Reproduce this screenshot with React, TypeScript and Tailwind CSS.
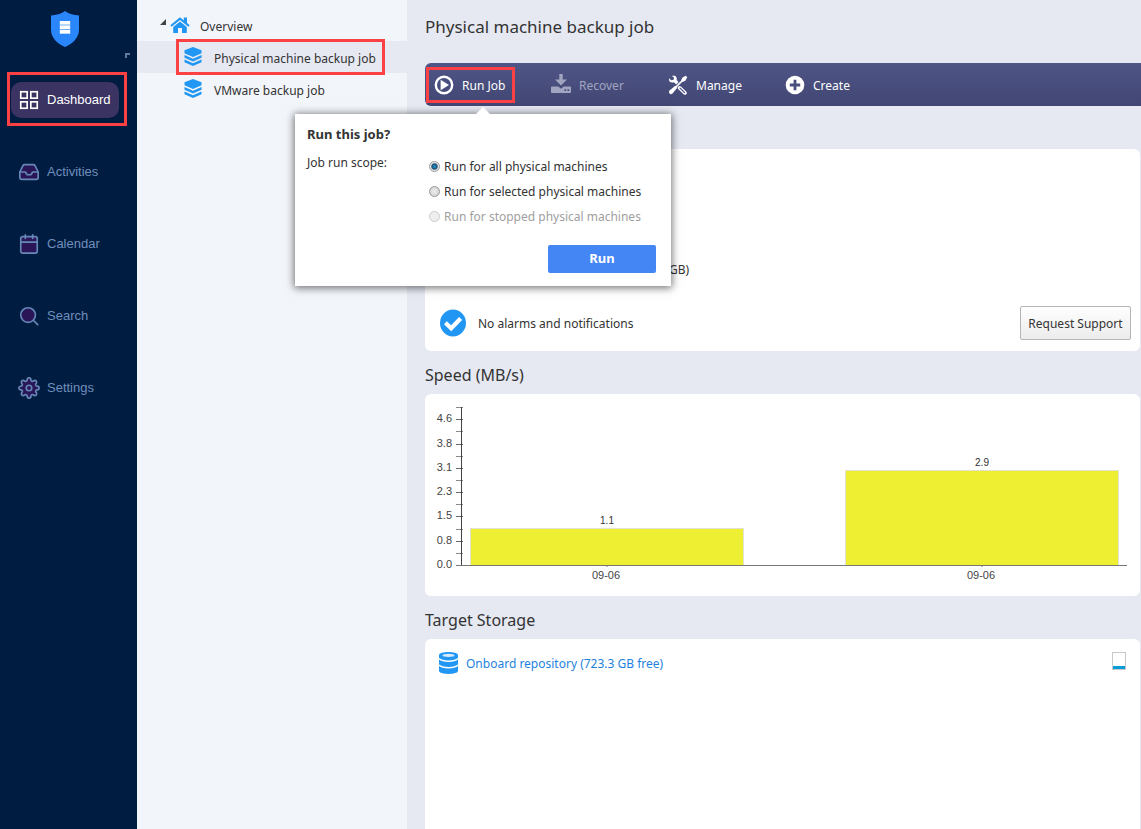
import type { ReactNode } from "react";

function ShieldLogo() {
  return (
    <svg width="28" height="36" viewBox="0 0 28 36" role="img" aria-label="Logo">
      <path d="M14 0 C10 3 5 4 0 4.500 V19 C0 27 7 33 14 36 C21 33 28 27 28 19 V4.500 C23 4 18 3 14 0Z" fill="#2a86fb" />
      <rect x="8.500" y="10" width="11" height="13" fill="#6fb0fd" />
      <rect x="9" y="10" width="10" height="3.500" fill="#fff" />
      <rect x="9" y="14.500" width="10" height="3.500" fill="#fff" />
      <rect x="9" y="19" width="10" height="3.500" fill="#fff" />
    </svg>
  );
}

function NavIcon({ children, active = false }: { children: ReactNode; active?: boolean }) {
  return (
    <svg
      width="22"
      height="22"
      viewBox="0 0 24 24"
      fill={active ? "none" : "#2a1657"}
      stroke={active ? "#fff" : "#6688b8"}
      strokeWidth="1.800"
      strokeLinecap="round"
      strokeLinejoin="round"
      aria-hidden="true"
    >
      {children}
    </svg>
  );
}

const dashboardIcon = (
  <>
    <rect x="3" y="3" width="7" height="7" strokeLinejoin="miter" />
    <rect x="14" y="3" width="7" height="7" strokeLinejoin="miter" />
    <rect x="14" y="14" width="7" height="7" strokeLinejoin="miter" />
    <rect x="3" y="14" width="7" height="7" strokeLinejoin="miter" />
  </>
);

const activitiesIcon = (
  <>
    <path d="M5.450 5.110 L2 12 v6 a2 2 0 0 0 2 2 h16 a2 2 0 0 0 2-2 v-6 l-3.450-6.890 A2 2 0 0 0 16.760 4 H7.240 a2 2 0 0 0-1.790 1.110z" />
    <path d="M22 12 h-6 l-2 3 h-4 l-2-3 H2" fill="none" />
  </>
);

const calendarIcon = (
  <>
    <rect x="3" y="4" width="18" height="18" rx="2" />
    <path d="M16 2v4M8 2v4M3 10h18" />
  </>
);

const searchIcon = (
  <>
    <circle cx="11" cy="11" r="8" />
    <path d="M21.500 21.500 L16.650 16.650" />
  </>
);

const settingsIcon = (
  <>
    <path d="M19.400 15a1.650 1.650 0 0 0 .33 1.820l.06.06a2 2 0 0 1 0 2.830 2 2 0 0 1-2.830 0l-.06-.06a1.650 1.650 0 0 0-1.820-.33 1.650 1.650 0 0 0-1 1.510V21a2 2 0 0 1-2 2 2 2 0 0 1-2-2v-.09A1.650 1.650 0 0 0 9 19.400a1.650 1.650 0 0 0-1.820.33l-.06.06a2 2 0 0 1-2.830 0 2 2 0 0 1 0-2.830l.06-.06a1.650 1.650 0 0 0 .33-1.820 1.650 1.650 0 0 0-1.510-1H3a2 2 0 0 1-2-2 2 2 0 0 1 2-2h.09A1.650 1.650 0 0 0 4.600 9a1.650 1.650 0 0 0-.33-1.820l-.06-.06a2 2 0 0 1 0-2.830 2 2 0 0 1 2.830 0l.06.06a1.650 1.650 0 0 0 1.820.33H9a1.650 1.650 0 0 0 1-1.510V3a2 2 0 0 1 2-2 2 2 0 0 1 2 2v.09a1.650 1.650 0 0 0 1 1.510 1.650 1.650 0 0 0 1.820-.33l.06-.06a2 2 0 0 1 2.830 0 2 2 0 0 1 0 2.830l-.06.06a1.650 1.650 0 0 0-.33 1.820V9a1.650 1.650 0 0 0 1.510 1H21a2 2 0 0 1 2 2 2 2 0 0 1-2 2h-.09a1.650 1.650 0 0 0-1.510 1z" />
    <circle cx="12" cy="12" r="3" />
  </>
);

function HomeIcon() {
  return (
    <svg width="20" height="17" viewBox="0 0 20 17" fill="#2196f3" aria-hidden="true">
      <path d="M10 0.300 L0.300 8.200 L1.600 9.700 L10 2.900 L18.400 9.700 L19.700 8.200 L17 6 V0.500 H13.800 V3.400Z" />
      <path d="M10 4.400 L3.200 9.900 V16 H8 V11 H12 V16 H16.800 V9.900Z" />
    </svg>
  );
}

function LayersIcon() {
  return (
    <svg width="18" height="19" viewBox="0 0 18 19" fill="#2196f3" className="mb-[2px]" aria-hidden="true">
      <path d="M9 0 L17.500 3.200 V6.200 L9 10 L0.500 6.200 V3.200Z" />
      <path d="M0.500 8 L9 11.800 L17.500 8 V10.700 L9 14.500 L0.500 10.700Z" />
      <path d="M0.500 12.500 L9 16.300 L17.500 12.500 V15.200 L9 19 L0.500 15.200Z" />
    </svg>
  );
}

function PlayIcon() {
  return (
    <svg width="20" height="20" viewBox="0 0 20 20" aria-hidden="true">
      <circle cx="10" cy="10" r="8.200" fill="none" stroke="#fff" strokeWidth="2.400" />
      <path d="M6.600 4.800 L15 10 L6.600 15.200Z" fill="#fff" />
    </svg>
  );
}

function RecoverIcon() {
  return (
    <svg width="20" height="20" viewBox="0 0 20 20" fill="#a1a5c2" className="mb-[2px]" aria-hidden="true">
      <path d="M8.300 0 H11.700 V5.500 H16 L10 11.500 L4 5.500 H8.300Z" />
      <path
        fillRule="evenodd"
        d="M1 12.500 H7.300 L10 14.700 L12.700 12.500 H19 Q20 12.500 20 13.500 V18 Q20 19 19 19 H1 Q0 19 0 18 V13.500 Q0 12.500 1 12.500Z M13.500 15.200 V17 H15.200 V15.200Z M16.500 15.200 V17 H18.200 V15.200Z"
      />
    </svg>
  );
}

function ToolsIcon() {
  return (
    <svg width="20" height="20" viewBox="0 0 22 22" aria-hidden="true">
      <path d="M19.500 0.800 L21.200 2.500 L19.300 6 L16.300 7.600 L14.400 5.700 L16 2.700Z" fill="#fff" />
      <path d="M15.800 6.200 L8.500 13.500" stroke="#fff" strokeWidth="1.800" />
      <path d="M8 11.800 L10.200 14 L5 20.300 Q3.300 21.800 1.700 20.300 Q0.200 18.700 1.700 17Z" fill="#fff" />
      <path d="M4.200 0.800 L7.500 0.900 Q10.200 2.500 9.500 5.600 L11.600 7.800 L9 10.400 L6.600 8.100 Q3.200 8.900 1.300 6.500 L1 3.500 L3.700 5.900 L6.200 5.200 L6.700 2.900Z" fill="#fff" />
      <path d="M12.800 14.100 L18.600 19.700" stroke="#fff" strokeWidth="4" strokeLinecap="round" />
      <path d="M13.200 14.400 L18.300 19.400" stroke="#484d7d" strokeWidth="1.400" strokeLinecap="round" />
    </svg>
  );
}

function PlusIcon() {
  return (
    <svg width="20" height="20" viewBox="0 0 20 20" aria-hidden="true">
      <circle cx="10" cy="10" r="9.300" fill="#fff" />
      <path d="M10 4.800 V15.200 M4.800 10 H15.200" stroke="#4a4f80" strokeWidth="2.800" />
    </svg>
  );
}

function CheckIcon() {
  return (
    <svg width="26" height="28" viewBox="0 0 26 28" aria-hidden="true">
      <ellipse cx="13" cy="14" rx="13" ry="13.500" fill="#2196f3" />
      <path d="M5.400 13.700 L11.200 19.200 L20.600 9.500" fill="none" stroke="#fff" strokeWidth="4.200" />
    </svg>
  );
}

function DatabaseIcon() {
  return (
    <svg width="19" height="22" viewBox="0 0 19 22" aria-hidden="true">
      <path d="M0 3.200 V18.800 C0 23 19 23 19 18.800 V3.200 C19 -1 0 -1 0 3.200Z" fill="#2196f3" />
      <ellipse cx="9.500" cy="3.400" rx="6" ry="1.700" fill="#d5ebfd" />
      <path d="M0 6.500 C3 10 16 10 19 6.500 M0 13 C3 16.500 16 16.500 19 13" fill="none" stroke="#fff" strokeWidth="1.500" />
    </svg>
  );
}

function Highlight({ className }: { className: string }) {
  return <span aria-hidden="true" className={`pointer-events-none absolute border-3 border-[#fb4144] ${className}`} />;
}

const navItems = [
  { label: "Dashboard", icon: dashboardIcon, active: true },
  { label: "Activities", icon: activitiesIcon, active: false },
  { label: "Calendar", icon: calendarIcon, active: false },
  { label: "Search", icon: searchIcon, active: false },
  { label: "Settings", icon: settingsIcon, active: false },
];

function Sidebar() {
  return (
    <aside className="flex w-[137px] shrink-0 flex-col bg-[#001c40]">
      <div className="flex justify-center pt-[11px] pr-[7px]">
        <ShieldLogo />
      </div>
      <div className="flex h-[35px] items-start justify-end pt-[6px] pr-[7px]">
        <span className="h-[5px] w-[5px] border-t-2 border-l-2 border-[#5b7ba3]" />
      </div>
      <nav className="flex flex-col gap-9 font-['Liberation_Sans',sans-serif] text-[13px]">
        {navItems.map(({ label, icon, active }) => (
          <div key={label} className="relative px-[11px]">
            <a
              href="#"
              className={
                active
                  ? "flex h-9 w-[108px] items-center gap-[7px] rounded-[10px] bg-[#3b3362] pl-[7px] text-white"
                  : "flex h-9 w-[108px] items-center gap-[7px] pl-[7px] text-[#6f8fbd]"
              }
            >
              <NavIcon active={active}>{icon}</NavIcon>
              {label}
            </a>
            {active && <Highlight className="-top-[10px] left-[7px] h-[54px] w-[120px]" />}
          </div>
        ))}
      </nav>
    </aside>
  );
}

function JobTree() {
  return (
    <section aria-label="Jobs" className="w-[270px] shrink-0 bg-[#f2f5fa] pt-[9px]">
      <a href="#" className="flex h-8 items-center pl-[23px]">
        <svg width="6" height="6" viewBox="0 0 6 6" className="mr-1 mb-[6px]" aria-hidden="true">
          <path d="M6 0 V6 H0Z" fill="#444" />
        </svg>
        <HomeIcon />
        <span className="ml-[10px] pt-[3px]">Overview</span>
      </a>
      <div className="relative">
        <a href="#" className="flex h-8 items-center gap-3 bg-[#e6e9f2] pl-[47px]">
          <LayersIcon />
          <span className="pt-[3px]">Physical machine backup job</span>
        </a>
        <Highlight className="-top-[2px] left-[39px] h-9 w-[209px]" />
      </div>
      <a href="#" className="flex h-8 items-center gap-3 pl-[47px]">
        <LayersIcon />
        <span className="pt-[3px]">VMware backup job</span>
      </a>
    </section>
  );
}

function ToolButton({ icon, label, disabled = false }: { icon: ReactNode; label: string; disabled?: boolean }) {
  return (
    <button
      type="button"
      disabled={disabled}
      className={disabled ? "flex h-full items-center gap-2 text-[#a1a5c2]" : "flex h-full items-center gap-2 text-white"}
    >
      {icon}
      <span className="pt-[2px]">{label}</span>
    </button>
  );
}

const scopes = [
  { id: "all", label: "Run for all physical machines", disabled: false },
  { id: "selected", label: "Run for selected physical machines", disabled: false },
  { id: "stopped", label: "Run for stopped physical machines", disabled: true },
];

function RunDialog() {
  return (
    <div
      role="dialog"
      aria-labelledby="run-title"
      className="absolute top-[51px] -left-[139px] z-10 w-[376px] bg-white px-3 pt-[11px] pb-[13px] shadow-[0_1px_8px_1px_rgba(0,0,0,0.55)]"
    >
      <svg width="16" height="8" viewBox="0 0 16 8" className="absolute -top-[7px] left-[180px]" aria-hidden="true">
        <path d="M8 0 L16 8 H0Z" fill="#fff" />
      </svg>
      <h2 id="run-title" className="text-[13px] leading-[18px] font-bold">
        Run this job?
      </h2>
      <fieldset className="mt-2 flex">
        <legend className="float-left w-[122px] pt-[3px] leading-[18px]">Job run scope:</legend>
        <div className="flex flex-col pt-[3px]">
          {scopes.map(({ id, label, disabled }) => (
            <label
              key={id}
              htmlFor={id}
              className={disabled ? "flex h-[25px] items-center gap-1 text-[#a0a0a0]" : "flex h-[25px] items-center gap-1"}
            >
              <input
                id={id}
                type="radio"
                name="scope"
                defaultChecked={id === "all"}
                disabled={disabled}
                className="h-[11px] w-[11px] appearance-none rounded-full border border-[#999] bg-radial from-[#eee] to-[#ccc] checked:from-[#1d7fae] checked:from-25% checked:via-[#1a3f66] checked:via-40% checked:to-[#e8e8e8] checked:to-60% disabled:border-[#ccc] disabled:to-[#eee]"
              />
              {label}
            </label>
          ))}
        </div>
      </fieldset>
      <div className="mt-4 flex justify-end pr-[3px]">
        <button type="button" className="h-7 w-[108px] rounded-xs bg-[#4586f5] text-[13px] font-bold text-white">
          Run
        </button>
      </div>
    </div>
  );
}

const yLabels = ["0.0", "0.8", "1.5", "2.3", "3.1", "3.8", "4.6"];
const bars = [
  { x: 46, top: 135, value: "1.1", day: "09-06" },
  { x: 421, top: 77, value: "2.9", day: "09-06" },
];

function SpeedChart() {
  return (
    <svg
      viewBox="0 0 715 202"
      className="block h-auto w-full font-['Liberation_Sans',sans-serif]"
      role="img"
      aria-label="Speed (MB/s)"
    >
      {bars.map((bar) => (
        <g key={bar.x}>
          <rect x={bar.x - 0.5} y={bar.top - 0.5} width="273" height={172 - bar.top} fill="#eeee33" stroke="#e2e2d0" />
          <text x={bar.x + 136} y={bar.top - 5} textAnchor="middle" fontSize="10" fill="#333">
            {bar.value}
          </text>
          <text x={bar.x + 135} y="185" textAnchor="middle" fontSize="11" fill="#444">
            {bar.day}
          </text>
          <path d={`M${bar.x + 136} 171v2`} stroke="#777" />
        </g>
      ))}
      {Array.from({ length: 14 }, (_, i) => (
        <path
          key={i}
          d={`M31 ${Math.round(171 - i * 12.15) + 0.5}h7`}
          stroke={i % 2 ? "#888" : "#666"}
        />
      ))}
      <path d="M36.500 13V172" stroke="#444" />
      <path d="M31 171.500H702" stroke="#777" />
      {yLabels.map((label, i) => (
        <text key={label} x="27" y={174 - i * 24.3} textAnchor="end" fontSize="11" fill="#444">
          {label}
        </text>
      ))}
    </svg>
  );
}

export default function App() {
  return (
    <div className="flex min-h-screen bg-[#e6e9f2] font-['Noto_Sans',sans-serif] text-xs text-[#333]">
      <Sidebar />
      <JobTree />
      <main className="flex min-w-0 flex-1 flex-col pl-[18px]">
        <h1 className="pt-[15px] text-[17px] leading-6">Physical machine backup job</h1>
        <div className="mt-6 flex h-[43px] shrink-0 rounded-l-md bg-linear-to-b from-[#4f5586] to-[#414673] pl-[9px]">
          <div className="relative w-[117px]">
            <ToolButton icon={<PlayIcon />} label="Run Job" />
            <Highlight className="top-1 -left-2 h-9 w-[89px]" />
            <RunDialog />
          </div>
          <div className="w-[117px]">
            <ToolButton icon={<RecoverIcon />} label="Recover" disabled />
          </div>
          <div className="w-[117px]">
            <ToolButton icon={<ToolsIcon />} label="Manage" />
          </div>
          <ToolButton icon={<PlusIcon />} label="Create" />
        </div>
        <div className="flex flex-col pr-px">
          <section className="mt-[43px] rounded-md bg-white pt-28 pb-[11px]">
            <p className="pl-[244px] leading-[18px]">GB)</p>
            <div className="mt-[27px] flex h-[34px] items-center gap-3 pr-[9px] pl-[15px]">
              <CheckIcon />
              <span className="pt-[2px]">No alarms and notifications</span>
              <button
                type="button"
                className="ml-auto h-[34px] w-[111px] rounded-xs border border-[#b5b5b5] bg-linear-to-b from-white to-[#ececec] pt-[2px]"
              >
                Request Support
              </button>
            </div>
          </section>
          <h2 className="mt-3 text-base leading-6">Speed (MB/s)</h2>
          <section className="mt-[7px] rounded-md bg-white">
            <SpeedChart />
          </section>
          <h2 className="mt-3 text-base leading-6">Target Storage</h2>
        </div>
        <section className="mt-[7px] mr-px flex flex-1 items-start justify-between rounded-t-md bg-white px-[14px] pt-[13px]">
          <a href="#" className="flex items-center gap-2 text-[#1e82dc]">
            <DatabaseIcon />
            <span className="pt-[2px]">Onboard repository (723.3 GB free)</span>
          </a>
          <span className="flex h-[18px] w-[14px] flex-col justify-end border border-[#c8c8c8]">
            <span className="h-[3px] bg-[#0a9cd6]" />
          </span>
        </section>
      </main>
    </div>
  );
}
